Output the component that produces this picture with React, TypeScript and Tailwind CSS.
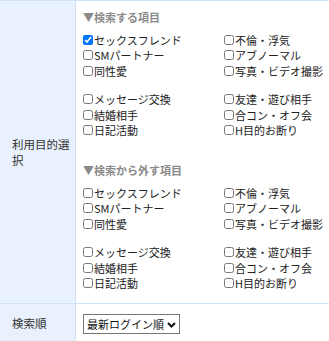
import React from "react";

const FONT = '"Noto Sans CJK JP", "Noto Sans", sans-serif';

const groupA = [
  ["セックスフレンド", "不倫・浮気"],
  ["SMパートナー", "アブノーマル"],
  ["同性愛", "写真・ビデオ撮影"],
];

const groupB = [
  ["メッセージ交換", "友達・遊び相手"],
  ["結婚相手", "合コン・オフ会"],
  ["日記活動", "H目的お断り"],
];

function Check({ label, checked }: { label: string; checked?: boolean }) {
  return (
    <label className="flex items-center h-[15.5px] whitespace-nowrap">
      <input
        type="checkbox"
        defaultChecked={checked}
        className="w-[10px] h-[10px] m-0 mr-[1px] shrink-0 accent-[#0075ff]"
      />
      <span>{label}</span>
    </label>
  );
}

function Group({ rows, checkedLabel }: { rows: string[][]; checkedLabel?: string }) {
  return (
    <div className="grid grid-cols-[141px_1fr]">
      {rows.map((r) => (
        <React.Fragment key={r[0]}>
          <Check label={r[0]} checked={r[0] === checkedLabel} />
          <Check label={r[1]} checked={r[1] === checkedLabel} />
        </React.Fragment>
      ))}
    </div>
  );
}

function Section({ title, checkedLabel }: { title: string; checkedLabel?: string }) {
  return (
    <div>
      <p className="leading-[15.5px] font-bold text-[#8a8a8a] mb-[6.5px]">▼{title}</p>
      <Group rows={groupA} checkedLabel={checkedLabel} />
      <div className="mt-[13px]">
        <Group rows={groupB} checkedLabel={checkedLabel} />
      </div>
    </div>
  );
}

export default function App() {
  return (
    <div
      className="w-[329px] h-[341px] overflow-hidden bg-white text-[11px] text-[#222]"
      style={{ fontFamily: FONT }}
    >
      <div className="border-t border-[#cfe2f6]">
        {/* 利用目的 */}
        <div className="flex border-b border-[#cfe2f6]">
          <div className="w-[76px] shrink-0 bg-[#e8f1fd] border-r border-[#cfe2f6] flex items-center pl-[12px] pr-[4px]">
            <p className="text-[11.5px] leading-[16px] text-[#333]">利用目的選択</p>
          </div>
          <div className="flex-1 pl-[7px] pt-[9px] pb-[12px]">
            <Section title="検索する項目" checkedLabel="セックスフレンド" />
            <div className="mt-[25px]">
              <Section title="検索から外す項目" />
            </div>
          </div>
        </div>

        {/* 検索順 */}
        <div className="flex h-[60px]">
          <div className="w-[76px] shrink-0 bg-[#e8f1fd] border-r border-[#cfe2f6] pl-[12px] pt-[11px]">
            <p className="text-[11.5px] leading-[16px] text-[#333]">検索順</p>
          </div>
          <div className="flex-1 pl-[7px] pt-[10px]">
            <div className="inline-flex items-center h-[20px] border border-[#767676] bg-white pl-[3px] pr-[3px] gap-[3px] text-[#111]">
              <span className="text-[11px] leading-none">最新ログイン順</span>
              <svg width="9" height="6" viewBox="0 0 9 6" className="mt-[1px]">
                <path d="M1 1 L4.5 4.5 L8 1" fill="none" stroke="#111" strokeWidth="2" />
              </svg>
            </div>
          </div>
        </div>
      </div>
    </div>
  );
}
